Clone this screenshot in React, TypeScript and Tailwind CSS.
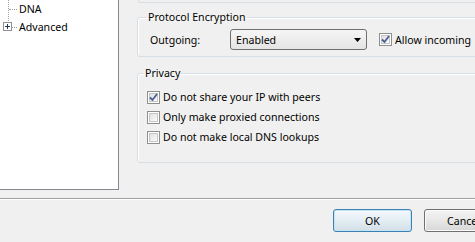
import React from "react";

const font = { fontFamily: '"Noto Sans", "Open Sans", Arial, sans-serif' };

function Check({ checked }: { checked?: boolean }) {
  return (
    <span className="w-[13px] h-[13px] shrink-0 border border-[#8e8f8f] bg-white p-[1px] flex">
      <span className="flex-1 border border-[#c6c6c6] bg-gradient-to-br from-[#e0e0e0] to-[#fbfbfb] flex items-center justify-center">
        {checked && (
          <svg width="9" height="9" viewBox="0 0 9 9" className="-m-[1px]">
            <path d="M1 4.5 L3.5 7 L8 1" fill="none" stroke="#4a5f97" strokeWidth="1.8" />
          </svg>
        )}
      </span>
    </span>
  );
}

function CheckRow({ label, checked }: { label: string; checked?: boolean }) {
  return (
    <div className="h-[20px] flex items-center gap-[2px]">
      <Check checked={checked} />
      <span className="ml-[1px]">{label}</span>
    </div>
  );
}

export default function App() {
  return (
    <div
      className="w-[475px] h-[242px] overflow-hidden bg-[#f0f0f0] text-[10.6px] leading-[16px] text-black flex flex-col"
      style={font}
    >
      <div className="h-[198px] flex">
        {/* Tree view */}
        <div className="w-[119px] h-[190px] shrink-0 bg-white border-r border-b border-[#828790] relative">
          <div className="absolute left-[8px] top-0 h-[23px] border-l border-dotted border-[#a0a0a0]" />
          <div className="absolute left-[9px] top-[9px] w-[8px] border-t border-dotted border-[#a0a0a0]" />
          <div className="absolute left-[12px] top-[27px] w-[5px] border-t border-dotted border-[#a0a0a0]" />
          <div className="flex flex-col pl-[19px] pt-[1px]">
            <div className="h-[17px] leading-[17px]">DNA</div>
            <div className="h-[18px] leading-[18px] flex items-center relative">
              <span className="absolute -left-[16px] top-[4px] w-[9px] h-[9px] border border-[#919191] bg-white flex items-center justify-center">
                <svg width="5" height="5" viewBox="0 0 5 5">
                  <path d="M0 2.5 H5 M2.5 0 V5" stroke="#1e395b" strokeWidth="1" />
                </svg>
              </span>
              Advanced
            </div>
          </div>
        </div>

        {/* Settings */}
        <div className="w-[380px] shrink-0 pl-[18px] flex flex-col">
          <div className="h-[3px] border-l border-b border-[#d5dfe5] rounded-bl-[2px] ml-[1px]" />

          <fieldset className="mt-[6px] border border-[#d5dfe5] rounded-[3px] shadow-[inset_1px_1px_0_#fff] pb-[6px]">
            <legend className="ml-[9px] px-[1px]">Protocol Encryption</legend>
            <div className="pt-[4px] pl-[12px] flex items-center">
              <span className="w-[80px]">Outgoing:</span>
              <div className="w-[137px] h-[21px] border border-[#707070] rounded-[3px] bg-gradient-to-b from-[#f6f6f6] to-[#e4e4e4] flex items-center pl-[5px] pr-[5px]">
                <span className="flex-1">Enabled</span>
                <svg width="7" height="4" viewBox="0 0 7 4">
                  <path d="M0 0 H7 L3.5 4 Z" fill="#000" />
                </svg>
              </div>
              <div className="ml-[12px] flex items-center gap-[3px]">
                <Check checked />
                <span className="whitespace-nowrap">Allow incoming</span>
              </div>
            </div>
          </fieldset>

          <fieldset className="mt-[8px] border border-[#d5dfe5] rounded-[3px] shadow-[inset_1px_1px_0_#fff] pb-[15px]">
            <legend className="ml-[6px] px-[1px]">Privacy</legend>
            <div className="pt-[6px] pl-[9px] flex flex-col">
              <CheckRow label="Do not share your IP with peers" checked />
              <CheckRow label="Only make proxied connections" />
              <CheckRow label="Do not make local DNS lookups" />
            </div>
          </fieldset>
        </div>
      </div>

      {/* Separator and buttons */}
      <div className="border-t border-[#a0a0a0]" />
      <div className="border-t border-white" />
      <div className="pt-[9px] pl-[333px] flex gap-[12px]">
        <button className="w-[79px] h-[23px] shrink-0 border border-[#3c7fb1] rounded-[3px] bg-gradient-to-b from-[#f4f9fc] via-[#e4eef4] to-[#d2dee6] shadow-[inset_0_0_0_1px_#c4e4f4]">
          OK
        </button>
        <button className="w-[79px] h-[23px] shrink-0 border border-[#707070] rounded-[3px] bg-gradient-to-b from-[#f4f4f4] via-[#e8e8e8] to-[#d6d6d6] shadow-[inset_0_0_0_1px_#fbfbfb]">
          Cancel
        </button>
      </div>
    </div>
  );
}
